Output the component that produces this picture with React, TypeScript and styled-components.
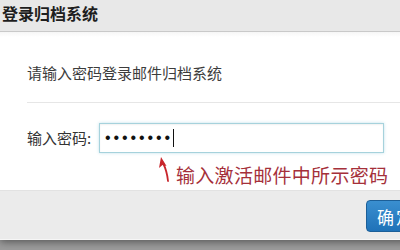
import styled, { createGlobalStyle } from 'styled-components';

const GlobalStyle = createGlobalStyle`
	html, body {
		margin: 0;
		padding: 0;
		width: 400px;
		height: 250px;
		overflow: hidden;
		background: #9c9c9c;
	}
	body {
		font-family: 'Noto Sans CJK SC', 'Noto Sans', sans-serif;
	}
`;

const Dialog = styled.section`
	width: 440px;
	display: flex;
	flex-direction: column;
	background: #fff;
	box-shadow: 0 2px 8px rgba(0, 0, 0, 0.45);
`;

const Header = styled.header`
	height: 31px;
	display: flex;
	align-items: center;
	padding-left: 2px;
	background: #e8e8e8;
	border-bottom: 1px solid #c9c9c9;
`;

const Title = styled.h1`
	margin: 0;
	font-size: 16px;
	line-height: 20px;
	font-weight: 700;
	color: #1e1e1e;
	margin-top: -6px;
`;

const Body = styled.div`
	height: 158px;
	padding: 31px 0 0 27px;
	box-sizing: border-box;
	background: linear-gradient(#f6f6f6, #fff 5px);
`;

const Intro = styled.p`
	margin: 0;
	font-size: 15px;
	line-height: 20px;
	color: #3c3c3c;
`;

const Divider = styled.hr`
	margin: 19px 0 0;
	border: 0;
	height: 1px;
	background: #e6e6e6;
`;

const FormRow = styled.div`
	margin-top: 20px;
	display: flex;
	align-items: center;
	gap: 4px;
`;

const Label = styled.label`
	font-size: 15px;
	line-height: 20px;
	color: #333;
	width: 68px;
`;

const Field = styled.div`
	width: 285px;
	height: 30px;
	box-sizing: border-box;
	border: 1px solid #a6d2dc;
	box-shadow: 0 0 3px rgba(120, 190, 210, 0.45), inset 0 1px 2px rgba(0, 0, 0, 0.06);
	display: flex;
	align-items: center;
	padding-left: 5px;
	background: #fff;
`;

const Dots = styled.span`
	font-family: 'Liberation Sans', Arial, sans-serif;
	font-size: 16px;
	letter-spacing: 2.9px;
	color: #111;
`;

const Caret = styled.span`
	display: inline-block;
	width: 1px;
	height: 18px;
	background: #111;
`;

const HintRow = styled.div`
	position: relative;
	margin-top: 9px;
	padding-left: 149px;
`;

const Hint = styled.span`
	font-size: 19px;
	line-height: 26px;
	color: #a5303a;
	letter-spacing: 0.3px;
`;

const Arrow = styled.svg`
	position: absolute;
	left: 131px;
	top: -5px;
`;

const Footer = styled.footer`
	height: 50px;
	box-sizing: border-box;
	display: flex;
	justify-content: flex-end;
	align-items: flex-start;
	padding: 9px 10px 0 0;
	background: #ebebeb;
	border-top: 1px solid #e2e2e2;
	border-bottom: 1px solid #f6f6f6;
`;

const Button = styled.button`
	width: 64px;
	height: 32px;
	border: 1px solid #1c5f98;
	border-radius: 4px;
	background: linear-gradient(#3a8fd0, #1f72b8);
	color: #fff;
	font-family: 'Noto Sans CJK SC', sans-serif;
	font-size: 17px;
	padding: 0 0 0 10px;
	text-align: left;
	letter-spacing: 2px;
`;

export default function App() {
	return (
		<>
			<GlobalStyle />
			<Dialog>
				<Header>
					<Title>登录归档系统</Title>
				</Header>
				<Body>
					<Intro>请输入密码登录邮件归档系统</Intro>
					<Divider />
					<FormRow>
						<Label>输入密码:</Label>
						<Field>
							<Dots>••••••••</Dots>
							<Caret />
						</Field>
					</FormRow>
					<HintRow>
						<Arrow width="14" height="26" viewBox="0 0 14 26">
							<path d="M10 24 Q9 14 5 6" stroke="#c8262c" strokeWidth="1.8" fill="none" strokeLinecap="round" />
							<path d="M3 0 L1 11 L4.5 8 L8.5 9 Z" fill="#c8262c" />
						</Arrow>
						<Hint>输入激活邮件中所示密码</Hint>
					</HintRow>
				</Body>
				<Footer>
					<Button>确定</Button>
				</Footer>
			</Dialog>
		</>
	);
}
